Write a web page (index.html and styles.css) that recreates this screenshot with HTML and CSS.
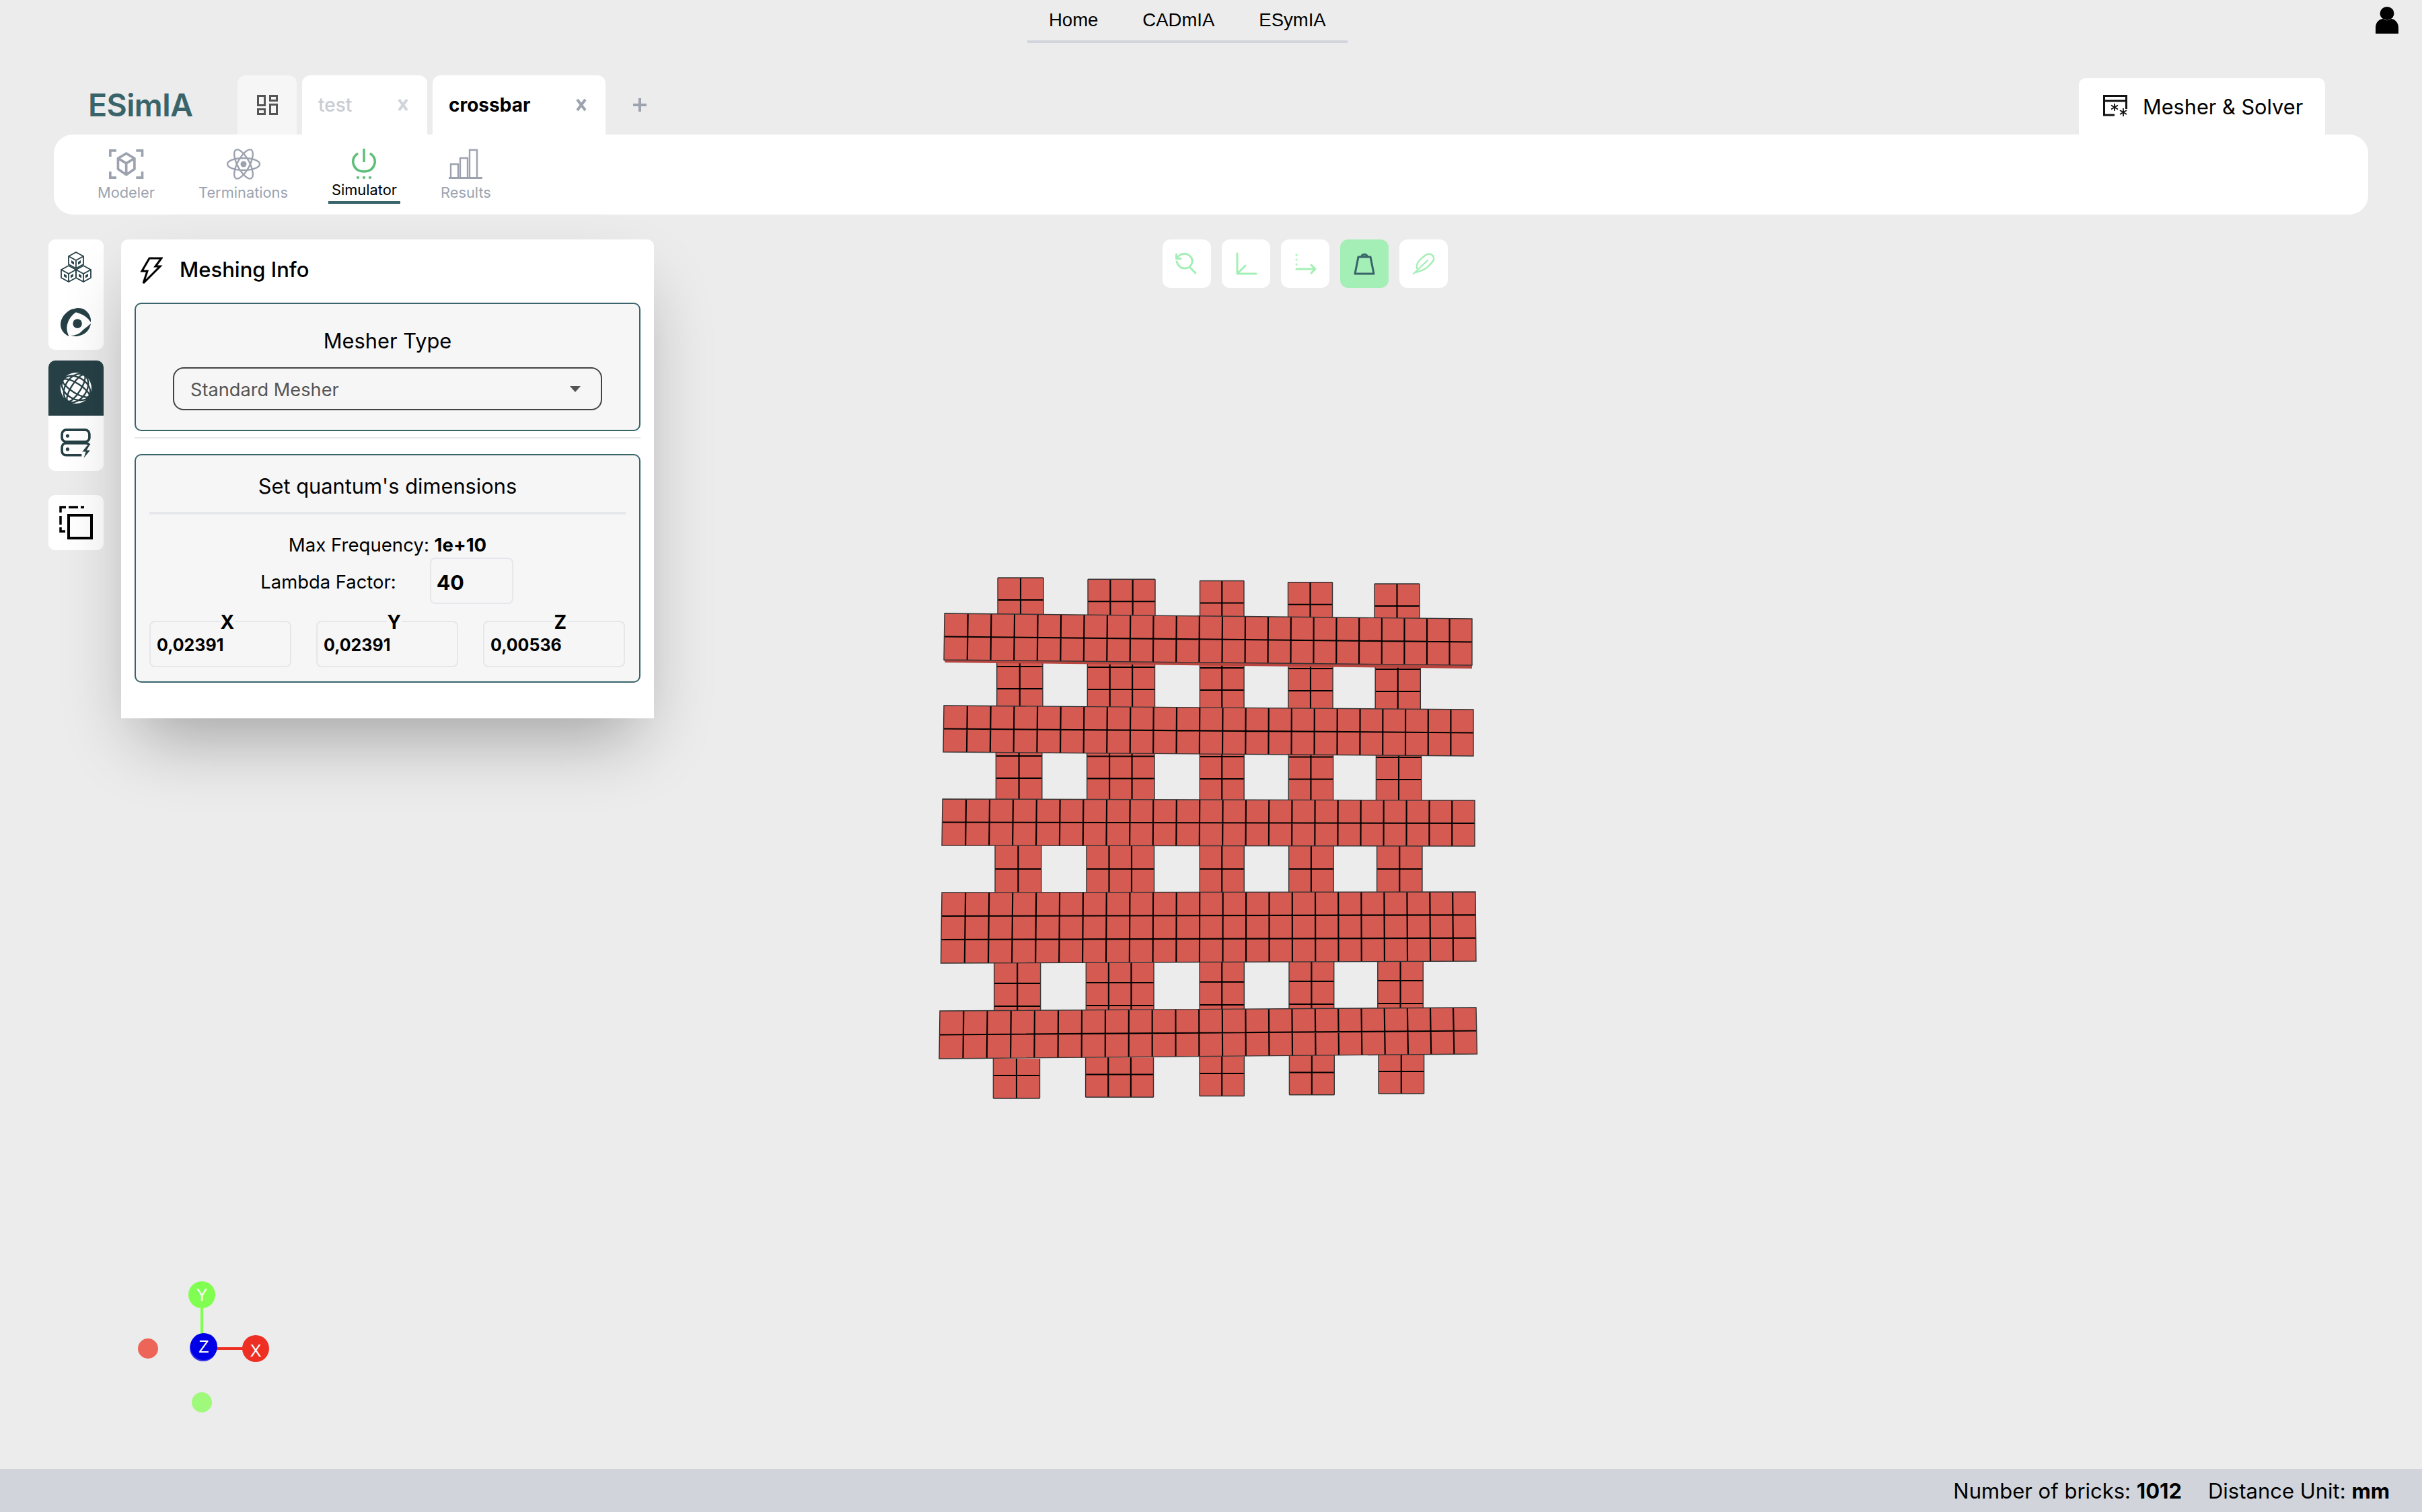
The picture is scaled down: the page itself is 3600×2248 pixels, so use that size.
FILE: index.html
```html
<!DOCTYPE html>
<html lang="en">
<head>
<meta charset="utf-8">
<title>ESimIA</title>
<link rel="stylesheet" href="styles.css">
</head>
<body>
<div class="page">
  <svg class="mesh" id="mesh" viewBox="0 0 3600 2248" aria-hidden="true"></svg>

  <header class="top">
    <span></span>
    <nav class="links">
      <a class="link">Home</a>
      <a class="link">CADmIA</a>
      <a class="link">ESymIA</a>
    </nav>
    <svg class="user" viewBox="0 0 34 40"><ellipse cx="17" cy="10" rx="10.5" ry="10"/><path d="M0 40V31C0 23 6 18 11 18C14 21 20 21 23 18C28 18 34 23 34 31V40Z"/></svg>
  </header>

  <div class="tabrow">
    <div class="logo">ESimIA</div>
    <div class="tab tab-home">
      <svg class="i-dash" viewBox="0 0 31 30"><path d="M1.5 1.5h10v14h-10zM1.5 21.500h10v7h-10zM19.500 1.500h10v7h-10zM19.500 14.500h10v14h-10z"/></svg>
    </div>
    <div class="tab tab-test"><span>test</span><svg class="close close-soft" viewBox="0 0 16 20"><path d="M2 2L14 18M14 2L2 18"/></svg></div>
    <div class="tab tab-cross"><span>crossbar</span><svg class="close" viewBox="0 0 16 20"><path d="M2 2L14 18M14 2L2 18"/></svg></div>
    <svg class="plus" viewBox="0 0 22 22"><path d="M11 1V21M1 11H21"/></svg>
    <div class="tab-right">
      <svg class="i-win" viewBox="0 0 36 34"><path d="M34.500 21V1.500H1.500V30H17M1.500 9H34.500" /><path class="fine" d="M17 13v11M12 15.500l10 6M22 15.500l-10 6M30 20v12M25 23l10 6M35 23l-10 6"/></svg>
      <span>Mesher &amp; Solver</span>
    </div>
  </div>

  <div class="ribbon">
    <div class="item">
      <svg class="ico" viewBox="0 0 42 36"><path class="line" d="M1.500 9V1.500H9M33 1.500H40.500V9M40.500 27V34.500H33M9 34.500H1.500V27"/><path class="line" d="M21 5L31 11V24L21 31L11 24V11ZM11 11L21 17L31 11M21 17V31"/></svg>
      <span>Modeler</span>
    </div>
    <div class="item">
      <svg class="ico" viewBox="0 0 50 44"><g class="line thin"><ellipse cx="25" cy="22" rx="24" ry="9"/><ellipse cx="25" cy="22" rx="24" ry="9" transform="rotate(62 25 22)"/><ellipse cx="25" cy="22" rx="24" ry="9" transform="rotate(-62 25 22)"/></g><circle class="dot" cx="25" cy="22" r="4.500"/></svg>
      <span>Terminations</span>
    </div>
    <div class="item item-on">
      <svg class="ico" viewBox="0 0 36 46"><path class="pow" d="M18 1V21M9 8C3 12 1 18 2 23C4 31 10 35 18 35C26 35 32 31 34 23C35 18 33 12 27 8"/><path class="pow dots" d="M7 44h4M16 44h4M25 44h4"/></svg>
      <span>Simulator</span>
    </div>
    <div class="item">
      <svg class="ico" viewBox="0 0 50 44"><path class="line thin" d="M3 41V22H14V41M17 41V13H28V41M31 41V1H42V41"/><path class="line" d="M0 42.500H50"/></svg>
      <span>Results</span>
    </div>
  </div>

  <main class="main">
    <div class="side">
      <div class="card">
        <button class="sb">
          <svg class="sbi" viewBox="0 0 46 46"><g class="cube"><path d="M23 1L34 7V19L23 25L12 19V7ZM12 7L23 13L34 7M23 13V25"/><path d="M12 21L1 27V39L12 45L23 39V27ZM1 27L12 33L23 27M12 33V45"/><path d="M34 21L23 27V39L34 45L45 39V27ZM23 27L34 33L45 27M34 33V45"/></g><g class="solid"><path d="M16 13L20 15.500V19.500L16 17ZM30 13L26 15.500V19.500L30 17ZM5 33L9 35.500V39.500L5 37ZM19 33L15 35.500V39.500L19 37ZM27 33L31 35.500V39.500L27 37ZM41 33L37 35.500V39.500L41 37Z"/></g></svg>
        </button>
        <button class="sb">
          <svg class="sbi" viewBox="0 0 44 42"><g class="solid"><path d="M17 2C7 6 0 15 0 24C0 32 5 38 12 41C9 35 8 29 10 23C12 16 17 10 23 6Z"/><path d="M14 5C20 0 28 0 34 3C40 7 44 14 43 21C39 15 34 11 28 9C23 7 18 6 14 5Z"/><path d="M43 23C42 31 36 38 28 40C23 42 17 41 15 40C22 40 28 37 32 32C36 29 40 26 43 23Z"/><circle cx="24" cy="23" r="6.500"/></g></svg>
        </button>
      </div>
      <div class="card">
        <button class="sb sb-on">
          <svg class="sbi" viewBox="0 0 46 46"><circle class="globe" cx="23" cy="23" r="23"/><g class="globe-lines" transform="rotate(32 23 23)"><ellipse cx="23" cy="23" rx="7" ry="23"/><ellipse cx="23" cy="23" rx="16" ry="23"/><ellipse cx="23" cy="23" rx="23" ry="7"/><ellipse cx="23" cy="23" rx="23" ry="16"/></g></svg>
        </button>
        <button class="sb">
          <svg class="sbi" viewBox="0 0 44 42"><g class="srv"><rect x="2" y="2" width="39" height="17" rx="6"/><path d="M30 38H8C4 38 2 35 2 32V27C2 24 4 21 8 21H36C38 21 40 22 41 24"/></g><g class="solid"><circle cx="10" cy="10.500" r="2.500"/><circle cx="10" cy="29.500" r="2.500"/><path d="M38 24L31 33H36L33 42L42 31H37L41 24Z"/></g></svg>
        </button>
      </div>
      <div class="card card-gap">
        <button class="sb">
          <svg class="sbi copy" viewBox="0 0 50 50"><path class="dash" d="M2 10V2H10M14 2H28M32 2H37M2 15V28M2 32V38H9"/><rect class="sq" x="14" y="14" width="34" height="34"/></svg>
        </button>
      </div>
    </div>

    <section class="panel">
      <div class="panel-head">
        <svg class="bolt" viewBox="0 0 34 42"><path d="M14 2H32L23 14H30L5 39L11 21H3Z"/></svg>
        <h2 class="panel-title">Meshing Info</h2>
      </div>
      <div class="box box-type">
        <div class="box-title">Mesher Type</div>
        <div class="select"><span>Standard Mesher</span><i class="caret"></i></div>
      </div>
      <hr class="rule">
      <div class="box box-dim">
        <div class="box-title">Set quantum's dimensions</div>
        <hr class="rule rule-in">
        <p class="freq">Max Frequency: <b>1e+10</b></p>
        <div class="lambda"><span>Lambda Factor:</span><div class="field-l">40</div></div>
        <div class="xyz">
          <div class="field"><span class="legend">X</span>0,02391</div>
          <div class="field"><span class="legend">Y</span>0,02391</div>
          <div class="field"><span class="legend">Z</span>0,00536</div>
        </div>
      </div>
    </section>

    <div class="tools">
      <button class="tool"><svg viewBox="0 0 36 36"><path d="M31 32L22 23M3 15C5 21 9 25 15 25C21 25 25 21 26 16C27 10 23 5 17 3.500C11 2 5 6 3 10.500M2.500 4V10.500H9"/></svg></button>
      <button class="tool"><svg viewBox="0 0 36 36"><path d="M5 3V33H33M5 33L17 21"/></svg></button>
      <button class="tool"><svg viewBox="0 0 36 36"><path d="M5 5V5.100M5 12V12.100M5 19V19.100M5 26H33M27 20L33 26L27 32"/></svg></button>
      <button class="tool tool-on"><svg viewBox="0 0 36 36"><path d="M9 8H27L32 33H4ZM14 8C13 3 23 3 22 8"/></svg></button>
      <button class="tool"><svg class="feather" viewBox="0 0 36 36"><path d="M3 33L24 13M6 31C12 29 20 28 25 22C28 19 32 15 33 12C34 7 30 3 25 3.500C21 4 16 9 12 13C9 16 7 19 8 25"/></svg></button>
    </div>

    <svg class="gizmo" viewBox="0 0 240 240">
      <circle cx="40" cy="125" r="15" class="g-nx"/>
      <circle cx="120" cy="205" r="15" class="g-ny"/>
      <path class="g-ly" d="M120 65V110"/>
      <path class="g-lx" d="M123 125H200"/>
      <circle cx="122" cy="124" r="20" class="g-zb"/>
      <circle cx="123" cy="122" r="20" class="g-z"/>
      <circle cx="120" cy="45" r="20" class="g-y"/>
      <circle cx="200" cy="125" r="20" class="g-x"/>
      <text x="120" y="54">Y</text>
      <text x="123" y="131">Z</text>
      <text x="200" y="137">X</text>
    </svg>
  </main>

  <footer class="status">
    <span>Number of bricks: <b>1012</b></span>
    <span>Distance Unit: <b>mm</b></span>
  </footer>
</div>
<script src="script.js"></script>
</body>
</html>
```
FILE: styles.css
```css
* { box-sizing: border-box; }
html, body { margin: 0; padding: 0; }
body { font-family: Inter, "Liberation Sans", sans-serif; color: #000; background: #ececec; overflow: hidden; }
.page { position: relative; width: 3600px; height: 2248px; display: flex; flex-direction: column; background: #ececec; }
.mesh { position: absolute; left: 0; top: 0; width: 3600px; height: 2248px; }
.cellfill { fill: #d55a52; stroke: none; }
.side-strip { fill: #b8453f; }
.inner { stroke: #000; stroke-width: 2.1; fill: none; }
.outer { stroke: #333; stroke-width: 1.4; fill: none; }

.top { height: 112px; display: grid; grid-template-columns: 1527px auto 1fr; position: relative; }
.links { height: 64px; display: flex; gap: 66px; padding: 0 32px; align-items: center; border-bottom: 4px solid #d1d5db; font-family: "Liberation Sans", sans-serif; font-size: 27.500px; }
.link { line-height: 60px; }
.user { justify-self: end; width: 34px; height: 40px; margin: 10px 35px 0 0; fill: #000; }

.tabrow { height: 88px; display: flex; align-items: flex-end; padding-left: 131px; gap: 8px; position: relative; }
.logo { width: 155px; margin-right: 59px; align-self: center; font-size: 46.500px; font-weight: 600; color: #38646a; line-height: 60px; letter-spacing: -0.6px; white-space: nowrap; }
.tab { height: 88px; border-radius: 12px 12px 0 0; background: #fff; display: flex; align-items: center; font-size: 28px; }
.tab-home { width: 88px; background: #f6f6f6; justify-content: center; }
.i-dash { width: 31px; height: 30px; fill: none; stroke: #555; stroke-width: 3; }
.tab-test { width: 186px; padding: 0 28px 0 24px; justify-content: space-between; color: #c9ccd2; font-weight: 500; }
.tab-cross { width: 257px; padding: 0 28px 0 24px; justify-content: space-between; font-weight: 700; }
.close { width: 16px; height: 20px; fill: none; stroke: #9ca3af; stroke-width: 4; }
.close-soft { stroke: #d1d5db; }
.plus { width: 22px; height: 22px; align-self: center; margin-left: 32px; fill: none; stroke: #9ca3af; stroke-width: 4; }
.tab-right { margin-left: auto; margin-right: 144px; width: 366px; height: 84px; background: #fff; border-radius: 10px 10px 0 0; display: flex; align-items: center; padding-left: 36px; gap: 23px; font-size: 30.700px; font-weight: 400; }
.i-win { width: 36px; height: 34px; fill: none; stroke: #111; stroke-width: 3; flex: none; }
.i-win .fine { stroke-width: 1.8; }

.ribbon { height: 119px; margin: 0 80px; background: #fff; border-radius: 28px; display: flex; gap: 55px; padding-left: 60px; position: relative; }
.item { position: relative; height: 119px; padding: 0 5px; display: flex; flex-direction: column; align-items: center; font-size: 21.800px; color: #9ca3af; line-height: 26px; }
.item .ico { height: 44px; margin-top: 22px; margin-bottom: 7px; overflow: visible; }
.item-on { color: #000; }
.item-on .ico { height: 46px; margin-top: 20px; margin-bottom: 3px; }
.item-on::after { content: ""; position: absolute; left: 0; right: 0; top: 99px; height: 4px; background: #38646a; }
.line { fill: none; stroke: #9ca3af; stroke-width: 3; }
.thin { stroke-width: 2.400; }
.dot { fill: #9ca3af; }
.pow { fill: none; stroke: #5fbe78; stroke-width: 3.5; }
.dots { stroke-width: 3.500; }

.main { position: relative; flex: 1; display: flex; align-items: flex-start; padding: 37px 0 0 72px; gap: 26px; }
.side { width: 82px; display: flex; flex-direction: column; gap: 16px; }
.card { background: #fff; border-radius: 10px; overflow: hidden; display: flex; flex-direction: column; }
.card-gap { margin-top: 20px; }
.sb { width: 82px; height: 82px; border: 0; padding: 0; background: #fff; display: flex; align-items: center; justify-content: center; }
.sb-on { background: #264046; }
.sbi { width: 46px; height: 46px; overflow: visible; }
.cube { fill: none; stroke: #264046; stroke-width: 1.800; }
.solid { fill: #264046; }
.globe { fill: #fff; }
.globe-lines { fill: none; stroke: #264046; stroke-width: 2.300; }
.srv { fill: none; stroke: #264046; stroke-width: 3.500; }
.copy { width: 50px; height: 50px; }
.dash { fill: none; stroke: #000; stroke-width: 3.500; }
.sq { fill: none; stroke: #000; stroke-width: 4; }

.panel { position: relative; width: 792px; height: 712px; padding: 0 20px; background: #fff; border-radius: 10px 10px 0 0; box-shadow: 0 50px 100px -24px rgba(0,0,0,.32); }
.panel-head { height: 90px; margin-bottom: 4px; display: flex; align-items: center; padding-left: 8px; gap: 25px; }
.bolt { width: 34px; height: 42px; margin-top: 4px; fill: none; stroke: #000; stroke-width: 3; flex: none; }
.panel-title { margin: 0; font-size: 31px; font-weight: 500; line-height: 44px; }
.box { background: #f6f6f6; border: 2px solid #38646a; border-radius: 10px; text-align: center; }
.box-type { height: 191px; padding: 33px 55px 0; }
.box-title { font-size: 30.800px; line-height: 44px; }
.box-dim .box-title { line-height: 46px; margin-bottom: -2px; }
.select { height: 64px; margin-top: 17px; padding: 2px 24px 0; border: 2px solid #444; border-radius: 16px; display: flex; align-items: center; justify-content: space-between; font-size: 27.200px; color: #555; }
.caret { width: 0; height: 0; border-left: 8px solid transparent; border-right: 8px solid transparent; border-top: 9px solid #555; margin: -2px 6px 0 0; }
.rule { height: 2px; margin: 9px 0 23px; border: 0; background: #e5e7eb; }
.box-dim { height: 340px; padding: 23px 20px 0; }
.rule-in { height: 4px; margin: 17px 0 26px; }
.freq { margin: 0; font-size: 27.600px; line-height: 38px; height: 36px; font-weight: 400; }
.freq b { font-weight: 700; }
.lambda { display: flex; justify-content: center; align-items: center; gap: 50px; margin-top: 2px; font-size: 27.400px; }
.lambda span { padding-top: 2px; margin-left: -2px; }
.field-l { width: 124px; height: 69px; padding-left: 8px; border: 2px solid #e5e7eb; border-radius: 8px; font-size: 30.500px; font-weight: 700; line-height: 69px; text-align: left; }
.xyz { display: grid; grid-template-columns: repeat(3, 211px); gap: 37px; margin-top: 25px; }
.field { position: relative; height: 69px; padding-left: 9px; border: 2px solid #e5e7eb; border-radius: 8px; font-size: 25px; font-weight: 700; line-height: 68px; text-align: left; }
.legend { position: absolute; left: 50%; top: -22px; transform: translateX(-1px); padding: 0 1px; font-size: 28px; line-height: 44px; background: #f6f6f6; height: 26px; overflow: visible; }

.tools { position: absolute; left: 1728px; top: 37px; display: flex; gap: 16px; }
.tool { width: 72px; height: 72px; padding: 0; border: 0; border-radius: 12px; background: #fff; display: flex; align-items: center; justify-content: center; }
.tool svg { width: 36px; height: 36px; fill: none; stroke: #a4efb5; stroke-width: 3; stroke-linecap: round; stroke-linejoin: round; }
.tool svg.feather { stroke-width: 2.400; }
.tool-on { background: #a4efb5; }
.tool-on svg { stroke: #38646a; }

.gizmo { position: absolute; left: 180px; top: 1561px; width: 240px; height: 240px; }
.gizmo text { font-family: "Liberation Sans", sans-serif; font-size: 25px; fill: #fff; text-anchor: middle; }
.g-nx { fill: #ed6559; }
.g-ny { fill: #9ff97a; }
.g-ly { stroke: #80ff50; stroke-width: 4; }
.g-lx { stroke: #ee3024; stroke-width: 4; }
.g-zb { fill: #3434e8; }
.g-z { fill: #0000e6; }
.g-y { fill: #80ff50; }
.g-x { fill: #ee3024; }

.status { height: 64px; background: #d1d5db; display: flex; justify-content: flex-end; align-items: center; gap: 39px; padding-right: 48px; font-size: 31px; position: relative; }
.status b { font-weight: 700; }
```
FILE: script.js
```javascript
// Draws the brick mesh: a slightly warped lattice of cells from measured outlines.
var NS = 'http://www.w3.org/2000/svg';
var svg = document.getElementById('mesh');
function add(tag, cls, attrs) {
  var e = document.createElementNS(NS, tag);
  e.setAttribute('class', cls);
  for (var k in attrs) e.setAttribute(k, attrs[k]);
  svg.appendChild(e);
}
function lerp(a, b, t) { return a + (b - a) * t; }
function quadPath(q) { return 'M' + q.map(function (p) { return p[0] + ' ' + p[1]; }).join('L') + 'Z'; }
function lattice(q, cols, rows, warp) {
  // q = TL, TR, BR, BL
  add('path', 'cellfill', { d: quadPath(q) });
  var d = '';
  function u(i) { var t = i / cols; return t + warp * t * (1 - t); }
  for (var i = 1; i < cols; i++) {
    var t = u(i);
    d += 'M' + lerp(q[0][0], q[1][0], t) + ' ' + lerp(q[0][1], q[1][1], t) +
         'L' + lerp(q[3][0], q[2][0], t) + ' ' + lerp(q[3][1], q[2][1], t);
  }
  for (var j = 1; j < rows; j++) {
    var v = j / rows;
    d += 'M' + lerp(q[0][0], q[3][0], v) + ' ' + lerp(q[0][1], q[3][1], v) +
         'L' + lerp(q[1][0], q[2][0], v) + ' ' + lerp(q[1][1], q[2][1], v);
  }
  add('path', 'inner', { d: d });
  add('path', 'outer', { d: quadPath(q) });
}
var groups = [
  { n: 2, l: [1483, 1476.4], r: [1551, 1545.5] },
  { n: 3, l: [1617, 1613.6], r: [1717, 1714.5] },
  { n: 2, l: [1783.5, 1783], r: [1849, 1849.4] },
  { n: 2, l: [1914.5, 1916.4], r: [1980.5, 1983.3] },
  { n: 2, l: [2043, 2049], r: [2110, 2116.6] }
];
// Each level: per-group [top, bottom, ...horizontal lines] for first and last group.
var levels = [
  { top: [859, 868], bottom: [914, 920], lines: [[892, 901]] },
  { top: [982, 987], bottom: [1050, 1055], lines: [[991, 995], [1024, 1028]] },
  { top: [1118, 1122], bottom: [1190, 1190], lines: [[1124, 1126], [1157, 1159]] },
  { top: [1257, 1258], bottom: [1328, 1326], lines: [[1292, 1292]] },
  { top: [1432, 1429], bottom: [1504, 1500], lines: [[1462, 1458], [1496, 1492]] },
  { top: [1574, 1567], bottom: [1633, 1626], lines: [[1599, 1593]] }
];
levels.forEach(function (lv, li) {
  groups.forEach(function (g, gi) {
    var s = gi / (groups.length - 1);
    var lt = li / 5;
    var x0 = lerp(g.l[0], g.l[1], lt), x1 = lerp(g.r[0], g.r[1], lt);
    var yt = lerp(lv.top[0], lv.top[1], s), yb = lerp(lv.bottom[0], lv.bottom[1], s);
    add('path', 'cellfill', { d: quadPath([[x0, yt], [x1, yt], [x1, yb], [x0, yb]]) });
    var d = '';
    for (var i = 1; i < g.n; i++) {
      var x = lerp(x0, x1, i / g.n);
      d += 'M' + x + ' ' + yt + 'L' + x + ' ' + yb;
    }
    lv.lines.forEach(function (ln) {
      var y = lerp(ln[0], ln[1], s);
      d += 'M' + x0 + ' ' + y + 'L' + x1 + ' ' + y;
    });
    add('path', 'inner', { d: d });
    add('path', 'outer', { d: 'M' + x0 + ' ' + yt + 'L' + x0 + ' ' + yb + 'M' + x1 + ' ' + yt + 'L' + x1 + ' ' + yb + (li === 0 || li === 5 ? (li === 0 ? 'M' + x0 + ' ' + yt + 'L' + x1 + ' ' + yt : 'M' + x0 + ' ' + yb + 'L' + x1 + ' ' + yb) : '') });
  });
});
add('path', 'side-strip', { d: quadPath([[1403, 981], [2188, 989], [2188, 994], [1405, 985]]) });
var bars = [
  { q: [[1404, 912], [2188, 920], [2188, 989], [1403, 981]], rows: 2 },
  { q: [[1403, 1049], [2190, 1055], [2190, 1124], [1402, 1118]], rows: 2 },
  { q: [[1401, 1188], [2192, 1190], [2192, 1258], [1400, 1257]], rows: 2 },
  { q: [[1400, 1327], [2193, 1326], [2194, 1429], [1398.5, 1432]], rows: 3 },
  { q: [[1397, 1503], [2194, 1498], [2195.5, 1567], [1396, 1574]], rows: 2 }
];
bars.forEach(function (b) { lattice(b.q, 23, b.rows, 0.02); });
```
